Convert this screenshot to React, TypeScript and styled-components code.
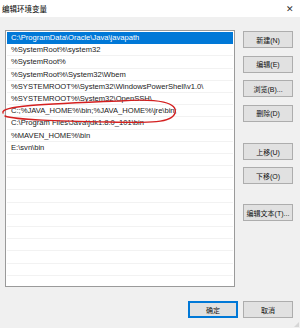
import React from "react";
import styled, { createGlobalStyle } from "styled-components";

const Global = createGlobalStyle`
  html, body { margin: 0; padding: 0; background: #f0f0f0; }
  * { box-sizing: border-box; }
`;

const FONT = `"Liberation Sans", "Noto Sans CJK SC", sans-serif`;

const Window = styled.div`
  position: relative;
  width: 300px;
  height: 328px;
  background: #f0f0f0;
  display: flex;
  flex-direction: column;
  font-family: ${FONT};
  overflow: hidden;
`;

const TitleBar = styled.div`
  height: 17px;
  background: #ffffff;
  display: flex;
  align-items: center;
  justify-content: space-between;
  padding: 0 6px 0 2px;
`;

const Title = styled.span`
  font-size: 7.5px;
  color: #000;
`;

const Close = styled.span`
  font-size: 9px;
  color: #333;
  font-family: "DejaVu Sans", sans-serif;
  font-weight: 300;
`;

const Main = styled.div`
  display: flex;
  gap: 8px;
  padding: 13px 7px 0 5px;
`;

const ListBox = styled.div`
  width: 230px;
  height: 257px;
  border: 1px solid #9a9a9a;
  background: #fff;
  padding: 1px 1px 0 1px;
  overflow: hidden;
`;

const Row = styled.div<{ $selected?: boolean }>`
  height: 12.2px;
  display: flex;
  align-items: center;
  padding-left: 4px;
  font-size: 7.6px;
  white-space: nowrap;
  color: ${(p) => (p.$selected ? "#fff" : "#1a1a1a")};
  background: ${(p) => (p.$selected ? "#0078d7" : "#fff")};
  border-bottom: 1px solid ${(p) => (p.$selected ? "#0078d7" : "#f2f2f2")};
`;

const ButtonColumn = styled.div`
  display: flex;
  flex-direction: column;
  padding-top: 1px;
`;

const Button = styled.div<{ $gap?: number; $default?: boolean }>`
  width: 50px;
  height: 17px;
  margin-top: ${(p) => p.$gap ?? 0}px;
  background: #e1e1e1;
  border: 1px solid ${(p) => (p.$default ? "#0078d7" : "#adadad")};
  box-shadow: ${(p) => (p.$default ? "inset 0 0 0 1px #0078d7" : "none")};
  display: flex;
  align-items: center;
  justify-content: center;
  font-size: 7px;
  color: #111;
  white-space: nowrap;
`;

const Footer = styled.div`
  display: flex;
  justify-content: flex-end;
  gap: 5px;
  padding: 14px 7px 0 0;
`;

const Grip = styled.div`
  position: absolute;
  right: 1px;
  bottom: 1px;
  width: 5px;
  height: 5px;
  background: radial-gradient(circle, #b8b8b8 0.6px, transparent 0.8px) 0 0 / 2px 2px;
  clip-path: polygon(100% 0, 100% 100%, 0 100%);
`;

const Annotation = styled.svg`
  position: absolute;
  left: 0;
  top: 0;
  pointer-events: none;
`;

const items = [
  "C:\\ProgramData\\Oracle\\Java\\javapath",
  "%SystemRoot%\\system32",
  "%SystemRoot%",
  "%SystemRoot%\\System32\\Wbem",
  "%SYSTEMROOT%\\System32\\WindowsPowerShell\\v1.0\\",
  "%SYSTEMROOT%\\System32\\OpenSSH\\",
  "C:;%JAVA_HOME%\\bin;%JAVA_HOME%\\jre\\bin;",
  "C:\\Program Files\\Java\\jdk1.8.0_101\\bin",
  "%MAVEN_HOME%\\bin",
  "E:\\svn\\bin",
];

const rows = [...items, ...Array(11).fill("")];

export default function App() {
  return (
    <>
      <Global />
      <Window>
        <TitleBar>
          <Title>编辑环境变量</Title>
          <Close>✕</Close>
        </TitleBar>
        <Main>
          <ListBox>
            {rows.map((t, i) => (
              <Row key={i} $selected={i === 0}>
                {t}
              </Row>
            ))}
          </ListBox>
          <ButtonColumn>
            <Button>新建(N)</Button>
            <Button $gap={7.5}>编辑(E)</Button>
            <Button $gap={7.5}>浏览(B)...</Button>
            <Button $gap={7.5}>删除(D)</Button>
            <Button $gap={21.5}>上移(U)</Button>
            <Button $gap={7}>下移(O)</Button>
            <Button $gap={20}>编辑文本(T)...</Button>
          </ButtonColumn>
        </Main>
        <Footer>
          <Button $default>确定</Button>
          <Button>取消</Button>
        </Footer>
        <Grip />
        <Annotation width="300" height="328" viewBox="0 0 300 328">
          <path
            d="M 3 113 C 0 106, 40 104, 120 101 C 160 98, 178 103, 175 113 C 172 123, 150 123, 110 122 C 60 121, 15 120, 5 116"
            fill="none"
            stroke="#d42020"
            strokeWidth="1.4"
            strokeLinecap="round"
          />
        </Annotation>
      </Window>
    </>
  );
}
